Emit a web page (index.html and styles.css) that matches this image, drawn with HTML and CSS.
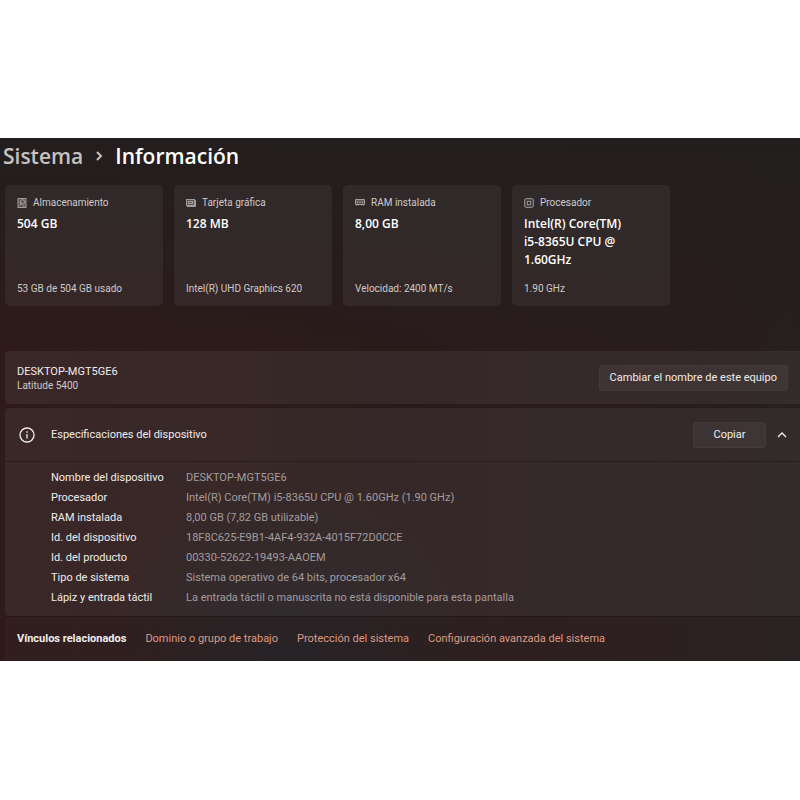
FILE: index.html
```html
<!DOCTYPE html>
<html lang="es">
<head>
<meta charset="utf-8">
<meta name="viewport" content="width=device-width, initial-scale=1">
<title>Sistema - Información</title>
<link rel="stylesheet" href="styles.css">
</head>
<body>
<main class="settings">
  <nav class="breadcrumb" aria-label="Ruta">
    <a class="crumb" href="#">Sistema</a>
    <svg class="crumb-arrow" viewBox="0 0 8 10" aria-hidden="true"><path d="M2 1l4 4-4 4"/></svg>
    <h1 class="crumb-current">Información</h1>
  </nav>

  <section class="cards">
    <article class="card">
      <h2 class="card-label">
        <svg class="card-icon" viewBox="0 0 10 10" aria-hidden="true"><rect class="shade" x="1" y=".5" width="8" height="9"/><circle cx="5.3" cy="4" r="2.3"/><path d="M5.3 4L2.8 7.6M6 8h1.5"/></svg>
        Almacenamiento
      </h2>
      <p class="card-value">504 GB</p>
      <p class="card-note">53 GB de 504 GB usado</p>
    </article>
    <article class="card">
      <h2 class="card-label">
        <svg class="card-icon" viewBox="0 0 10 10" aria-hidden="true"><rect class="shade" x=".5" y="1.5" width="8" height="6"/><rect x="2.5" y="3.5" width="4" height="2"/><path d="M9.5 2v6.5H1"/></svg>
        Tarjeta gráfica
      </h2>
      <p class="card-value">128 MB</p>
      <p class="card-note">Intel(R) UHD Graphics 620</p>
    </article>
    <article class="card">
      <h2 class="card-label">
        <svg class="card-icon" viewBox="0 0 10 10" aria-hidden="true"><path class="shade" d="M.5 1.5h9v5h-9z"/><path d="M2.5 3v2M5 3v2M7.5 3v2M1.5 6.5v1M3.5 6.5v1M6.5 6.5v1M8.5 6.5v1"/></svg>
        RAM instalada
      </h2>
      <p class="card-value">8,00 GB</p>
      <p class="card-note">Velocidad: 2400 MT/s</p>
    </article>
    <article class="card">
      <h2 class="card-label">
        <svg class="card-icon" viewBox="0 0 10 10" aria-hidden="true"><rect x=".8" y=".8" width="8.4" height="8.4" rx="1"/><rect x="3.3" y="3.3" width="3.4" height="3.4"/><path class="pins" d="M3 0v1M5 0v1M7 0v1M3 9v1M5 9v1M7 9v1M0 3h1M0 5h1M0 7h1M9 3h1M9 5h1M9 7h1"/></svg>
        Procesador
      </h2>
      <p class="card-value">Intel(R) Core(TM)<br>i5-8365U CPU @<br>1.60GHz</p>
      <p class="card-note">1.90 GHz</p>
    </article>
  </section>

  <section class="panel device">
    <div>
      <h2 class="device-name">DESKTOP-MGT5GE6</h2>
      <p class="device-model">Latitude 5400</p>
    </div>
    <button class="button" type="button">Cambiar el nombre de este equipo</button>
  </section>

  <section class="panel specs">
    <header class="specs-head">
      <svg class="info-icon" viewBox="0 0 16 16" aria-hidden="true"><circle cx="8" cy="8" r="7"/><path d="M8 7v4.5M8 4.3v1.4"/></svg>
      <h2 class="specs-title">Especificaciones del dispositivo</h2>
      <button class="button copy" type="button">Copiar</button>
      <button class="toggle" type="button" aria-label="Contraer" aria-expanded="true">
        <svg class="toggle-icon" viewBox="0 0 10 6" aria-hidden="true"><path d="M1 5l4-4 4 4"/></svg>
      </button>
    </header>
    <table class="spec-table">
      <tbody>
        <tr><th scope="row">Nombre del dispositivo</th><td>DESKTOP-MGT5GE6</td></tr>
        <tr><th scope="row">Procesador</th><td>Intel(R) Core(TM) i5-8365U CPU @ 1.60GHz (1.90 GHz)</td></tr>
        <tr><th scope="row">RAM instalada</th><td>8,00 GB (7,82 GB utilizable)</td></tr>
        <tr><th scope="row">Id. del dispositivo</th><td>18F8C625-E9B1-4AF4-932A-4015F72D0CCE</td></tr>
        <tr><th scope="row">Id. del producto</th><td>00330-52622-19493-AAOEM</td></tr>
        <tr><th scope="row">Tipo de sistema</th><td>Sistema operativo de 64 bits, procesador x64</td></tr>
        <tr><th scope="row">Lápiz y entrada táctil</th><td>La entrada táctil o manuscrita no está disponible para esta pantalla</td></tr>
      </tbody>
    </table>
  </section>

  <nav class="related" aria-labelledby="related-title">
    <h2 class="related-title" id="related-title">Vínculos relacionados</h2>
    <a class="link" href="#">Dominio o grupo de trabajo</a>
    <a class="link" href="#">Protección del sistema</a>
    <a class="link" href="#">Configuración avanzada del sistema</a>
  </nav>
</main>
</body>
</html>
```
FILE: styles.css
```css
* {
  box-sizing: border-box;
}

body {
  margin: 0;
  padding: 138px 0;
  background: #fff;
  color: #f0eded;
  font: 11px/16px Roboto, "Open Sans", sans-serif;
}

h1, h2, p {
  margin: 0;
  font-size: inherit;
  font-weight: 400;
}

svg {
  display: block;
  flex: none;
  fill: none;
  stroke: currentColor;
}

.settings {
  padding-left: 5px;
  background:
    radial-gradient(circle at 36% 100%, #232024 0, rgba(35, 32, 36, 0) 25%),
    linear-gradient(180deg, #231e1e 0, rgba(38, 29, 28, 0) 40%),
    linear-gradient(90deg, #2e1a1a 0, #2a1b1b 50%, #291c1d 85%, #271f1f 100%);
}

.breadcrumb {
  display: flex;
  align-items: center;
  height: 47px;
  padding-bottom: 11px;
  margin-left: -2px;
  font: 600 21px/28px "Open Sans", "Noto Sans", sans-serif;
}

.crumb {
  color: #c6c2c2;
  text-decoration: none;
}

.crumb-arrow {
  width: 8px;
  height: 10px;
  margin: 0 12px;
  color: #c6c2c2;
  stroke-width: 2;
}

.crumb-current {
  color: #fff;
  font-weight: 600;
}

.cards {
  display: grid;
  grid-template-columns: repeat(4, minmax(0, 158px));
  gap: 11px;
  margin-bottom: 45px;
}

.card {
  display: flex;
  flex-direction: column;
  min-height: 121px;
  padding: 10px 12px 9px;
  border-radius: 5px;
  background: rgba(255, 255, 255, 0.055);
}

.card-label {
  display: flex;
  align-items: center;
  gap: 6px;
  margin-bottom: 4px;
  color: #cfcaca;
  font-size: 10px;
}

.card-icon {
  width: 10px;
  height: 10px;
  color: #a39e9e;
}

.shade {
  fill: rgba(255, 255, 255, 0.2);
}

.pins {
  stroke-width: 0.6;
}

.card-value {
  color: #fff;
  font: 600 12px/18px "Open Sans", "Noto Sans", sans-serif;
}

.card-note {
  margin-top: auto;
  color: #cfcaca;
  font-size: 10px;
}

.panel {
  border-radius: 4px 0 0 4px;
  background: rgba(255, 255, 255, 0.06);
}

.device {
  display: flex;
  align-items: center;
  justify-content: space-between;
  min-height: 53px;
  margin-bottom: 4px;
  padding: 12px;
}

.device-model {
  color: #cfcaca;
  font-size: 10px;
  line-height: 12px;
}

.button {
  height: 26px;
  padding: 1px 10px 0;
  border: 1px solid rgba(255, 255, 255, 0.03);
  border-radius: 4px;
  background: rgba(255, 255, 255, 0.05);
  color: inherit;
  font: inherit;
}

.specs-head {
  display: flex;
  align-items: center;
  height: 54px;
  padding: 0 13px 0 14px;
  border-bottom: 1px solid rgba(20, 10, 10, 0.35);
}

.info-icon {
  width: 16px;
  height: 16px;
  margin-right: 16px;
  stroke-width: 1.3;
}

.specs-title {
  flex: 1;
}

.copy {
  width: 73px;
}

.toggle {
  margin-left: 6px;
  padding: 6px 0 6px 5px;
  border: 0;
  background: none;
  color: inherit;
}

.toggle-icon {
  width: 10px;
  height: 6px;
  stroke-width: 1.3;
}

.spec-table {
  margin: 0 0 0 46px;
  border-collapse: collapse;
  border-top: 6px solid transparent;
  border-bottom: 8px solid transparent;
  line-height: 20px;
}

.spec-table th,
.spec-table td {
  padding: 0;
  text-align: left;
  font-weight: 400;
}

.spec-table th {
  width: 135px;
}

.spec-table td {
  color: #a39d9d;
}

.related {
  display: flex;
  align-items: center;
  flex-wrap: wrap;
  gap: 4px 19px;
  min-height: 45px;
  padding-left: 12px;
  border-top: 1px solid rgba(20, 10, 10, 0.35);
  background: rgba(255, 255, 255, 0.02);
}

.related-title {
  font-weight: 700;
}

.link {
  color: #dd9a83;
  text-decoration: none;
}
```
